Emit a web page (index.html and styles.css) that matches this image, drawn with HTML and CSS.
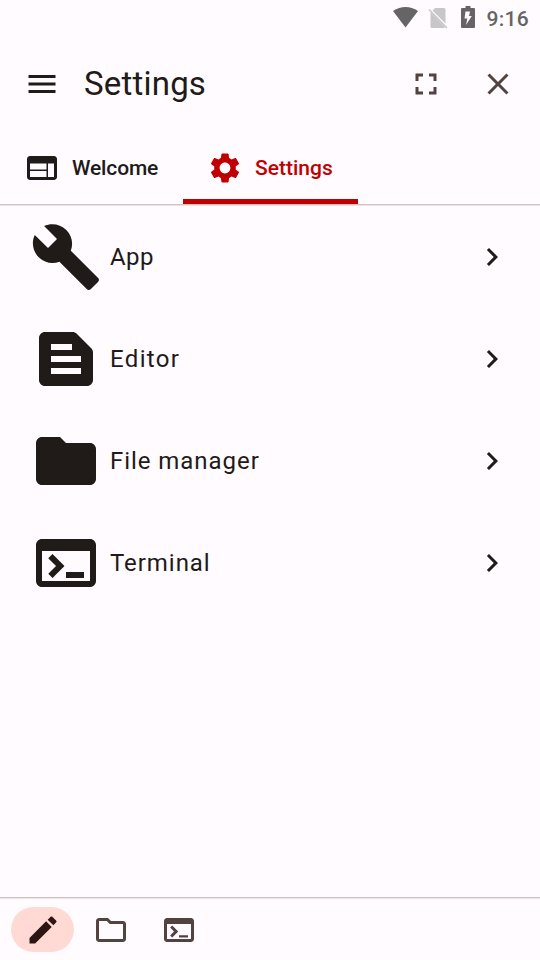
FILE: index.html
```html
<!DOCTYPE html>
<html lang="en">
<head>
<meta charset="utf-8">
<title>Settings</title>
<link rel="stylesheet" href="styles.css">
</head>
<body>
<div class="status">
  <svg class="wifi" width="28" height="22" viewBox="0 0 28 22"><path d="M1 4Q7 0 13.500 0T26 4L13.500 20.500Z"/></svg>
  <svg class="sim" width="20" height="22" viewBox="0 0 20 22"><path d="M7 0H16Q17.500 0 17.500 1.500V15.500L4.500 2.500ZM2.500 4L17 19Q16.500 20 15.500 20H4Q2.500 20 2.500 18.500Z"/><path class="slash" d="M1 1.500L19 20"/></svg>
  <svg class="battery" width="14" height="22" viewBox="0 0 14 22"><path fill-rule="evenodd" d="M4.500 0H9.500V2H13Q14 2 14 3V21Q14 22 13 22H1Q0 22 0 21V3Q0 2 1 2H4.500ZM9 5.500H4.500L3.500 12.500H6.300L5 19L10.800 10H8Z"/></svg>
  <span class="clock">9:16</span>
</div>
<header class="toolbar">
  <svg class="icon" viewBox="0 0 24 24"><path d="M3 18h18v-2H3v2zm0-5h18v-2H3v2zm0-7v2h18V6H3z"/></svg>
  <h1>Settings</h1>
  <svg class="icon muted" viewBox="0 0 24 24"><path d="M7 14H5v5h5v-2H7v-3zm-2-4h2V7h3V5H5v5zm12 7h-3v2h5v-5h-2v3zM14 5v2h3v3h2V5h-5z"/></svg>
  <svg class="icon muted" viewBox="0 0 24 24"><path d="M19 6.410L17.590 5 12 10.590 6.410 5 5 6.410 10.590 12 5 17.590 6.410 19 12 13.410 17.590 19 19 17.590 13.410 12z"/></svg>
</header>
<nav class="tabs">
  <div class="tab welcome">
    <svg class="icon" viewBox="0 0 24 24"><path d="M20 4H4c-1.100 0-1.990.9-1.990 2L2 18c0 1.100.9 2 2 2h16c1.100 0 2-.9 2-2V6c0-1.100-.9-2-2-2zm-5 14H4v-4h11v4zm0-5H4V9h11v4zm5 5h-4V9h4v9z"/></svg>
    <span>Welcome</span>
  </div>
  <div class="tab active">
    <svg class="icon" viewBox="0 0 24 24"><path d="M19.140 12.940c.04-.3.060-.61.060-.94 0-.32-.02-.64-.07-.94l2.030-1.580c.18-.14.230-.41.120-.61l-1.920-3.320c-.12-.22-.37-.29-.59-.22l-2.390.96c-.5-.38-1.030-.7-1.620-.94l-.36-2.540c-.04-.24-.24-.41-.48-.41h-3.840c-.24 0-.43.170-.47.410l-.36 2.540c-.59.240-1.130.570-1.620.94l-2.390-.96c-.22-.08-.47 0-.59.220L2.740 8.870c-.12.210-.08.470.12.610l2.030 1.580c-.05.3-.09.630-.09.940s.02.640.07.940l-2.030 1.580c-.18.140-.23.410-.12.610l1.920 3.320c.12.220.37.290.59.220l2.390-.96c.5.380 1.030.7 1.620.94l.36 2.540c.05.240.24.410.48.410h3.840c.24 0 .44-.17.470-.41l.36-2.540c.59-.24 1.130-.56 1.620-.94l2.390.96c.22.080.47 0 .59-.22l1.920-3.320c.12-.22.070-.47-.12-.61l-2.010-1.580zM12 15.600c-1.980 0-3.600-1.620-3.600-3.600s1.620-3.600 3.600-3.600 3.600 1.620 3.600 3.600-1.620 3.600-3.600 3.600z"/></svg>
    <span>Settings</span>
  </div>
</nav>
<main class="list">
  <div class="row app">
    <svg class="big" viewBox="0 0 24 24"><path d="M22.700 19l-9.100-9.100c.9-2.300.4-5-1.500-6.900-2-2-5-2.400-7.400-1.300L9 6 6 9 1.600 4.700C.4 7.100.9 10.100 2.900 12.100c1.900 1.900 4.600 2.400 6.900 1.500l9.100 9.100c.4.4 1 .4 1.400 0l2.300-2.300c.5-.4.5-1.100.1-1.400z"/></svg>
    <span>App</span>
    <svg class="icon" viewBox="0 0 24 24"><path d="M10 6L8.590 7.410 13.170 12l-4.580 4.590L10 18l6-6z"/></svg>
  </div>
  <div class="row editor">
    <svg class="big" viewBox="0 0 24 24"><path fill-rule="evenodd" d="M20.410 8.410l-4.830-4.830C15.210 3.210 14.700 3 14.170 3H5c-1.100 0-2 .9-2 2v14c0 1.100.9 2 2 2h14c1.100 0 2-.9 2-2V9.830c0-.53-.21-1.040-.59-1.420zM7 7h7v2H7V7zm10 10H7v-2h10v2zm0-4H7v-2h10v2z"/></svg>
    <span>Editor</span>
    <svg class="icon" viewBox="0 0 24 24"><path d="M10 6L8.590 7.410 13.170 12l-4.580 4.590L10 18l6-6z"/></svg>
  </div>
  <div class="row">
    <svg class="big" viewBox="0 0 24 24"><path d="M10 4H4c-1.100 0-1.990.9-1.990 2L2 18c0 1.100.9 2 2 2h16c1.100 0 2-.9 2-2V8c0-1.100-.9-2-2-2h-8l-2-2z"/></svg>
    <span>File manager</span>
    <svg class="icon" viewBox="0 0 24 24"><path d="M10 6L8.590 7.410 13.170 12l-4.580 4.590L10 18l6-6z"/></svg>
  </div>
  <div class="row">
    <svg class="big" viewBox="0 0 24 24"><path d="M20 4H4c-1.110 0-2 .9-2 2v12c0 1.100.89 2 2 2h16c1.100 0 2-.9 2-2V6c0-1.100-.89-2-2-2zm0 14H4V8h16v10zm-2-1h-6v-2h6v2zM7.500 17l-1.410-1.410L8.670 13l-2.590-2.590L7.500 9l4 4-4 4z"/></svg>
    <span>Terminal</span>
    <svg class="icon" viewBox="0 0 24 24"><path d="M10 6L8.590 7.410 13.170 12l-4.580 4.590L10 18l6-6z"/></svg>
  </div>
</main>
<footer class="bottom">
  <div class="action selected"><svg class="icon" viewBox="0 0 24 24"><path d="M3 17.250V21h3.750L17.810 9.940l-3.750-3.750L3 17.250zM20.710 7.040c.39-.39.390-1.020 0-1.410l-2.340-2.340c-.39-.39-1.020-.39-1.410 0l-1.830 1.830 3.750 3.750 1.830-1.830z"/></svg></div>
  <div class="action"><svg class="icon muted" viewBox="0 0 24 24"><path d="M9.170 6l2 2H20v10H4V6h5.170M10 4H4c-1.100 0-1.990.9-1.990 2L2 18c0 1.100.9 2 2 2h16c1.100 0 2-.9 2-2V8c0-1.100-.9-2-2-2h-8l-2-2z"/></svg></div>
  <div class="action"><svg class="icon muted" viewBox="0 0 24 24"><path d="M20 4H4c-1.110 0-2 .9-2 2v12c0 1.100.89 2 2 2h16c1.100 0 2-.9 2-2V6c0-1.100-.89-2-2-2zm0 14H4V8h16v10zm-2-1h-6v-1.500h6v1.500zM7.500 17l-1.410-1.410L8.670 13l-2.590-2.590L7.500 9l4 4-4 4z"/></svg></div>
</footer>
</body>
</html>
```
FILE: styles.css
```css
* { box-sizing: border-box; }
body {
  margin: 0;
  width: 540px;
  height: 960px;
  display: flex;
  flex-direction: column;
  background: #fffbff;
  color: #201a18;
  font-family: Roboto, sans-serif;
  overflow: hidden;
}
svg { display: block; flex: none; fill: currentColor; }
.icon { width: 36px; height: 36px; }
.muted { color: #534340; }

.status {
  height: 36px;
  display: flex;
  align-items: flex-start;
  justify-content: flex-end;
  padding: 7px 11px 0 0;
  color: #666465;
}
.wifi { margin-right: 8px; }
.sim { margin: 1px 13px 0 0; color: #c9c6c9; }
.slash { fill: none; stroke: #c9c6c9; stroke-width: 1.5; }
.battery { margin: -1px 11px 0 0; }
.clock {
  font-size: 21px;
  font-weight: 500;
  line-height: 25px;
  letter-spacing: 0.3px;
}

.toolbar {
  height: 96px;
  display: flex;
  align-items: center;
  padding: 0 24px;
}
h1 {
  flex: 1;
  margin: 0 0 0 24px;
  font-size: 33px;
  font-weight: 400;
  line-height: 42px;
  letter-spacing: 0.2px;
}
.toolbar .icon + .icon { margin-left: 36px; }

.tabs {
  height: 74px;
  display: flex;
  border-bottom: 1px solid #efe1e1;
  box-shadow: inset 0 -1px #d8c2be;
  font-size: 21px;
  font-weight: 500;
}
.tab {
  height: 72px;
  display: flex;
  align-items: center;
  gap: 12px;
  padding: 0 24px;
  border: solid transparent;
  border-width: 5px 0;
}
.welcome { width: 183px; letter-spacing: -0.15px; }
.active {
  width: 175px;
  color: #c00000;
  border-bottom-color: #c00000;
}

.list { flex: 1; }
.row {
  height: 102px;
  display: flex;
  align-items: center;
  padding: 0 30px;
}
.big { width: 72px; height: 72px; }
.row span {
  flex: 1;
  margin-left: 8px;
  font-size: 24px;
  line-height: 36px;
  letter-spacing: 0.95px;
}
.app span { letter-spacing: 0.4px; }
.editor span { letter-spacing: 1.35px; }

.bottom {
  height: 63px;
  display: flex;
  gap: 5px;
  padding: 9px 11px;
  border-top: 1px solid #d8c2be;
  box-shadow: inset 0 1px #efe1e1;
}
.action {
  width: 63px;
  height: 45px;
  display: flex;
  align-items: center;
  justify-content: center;
  border-radius: 23px;
}
.selected { background: #ffdad4; color: #2c1512; }
```
